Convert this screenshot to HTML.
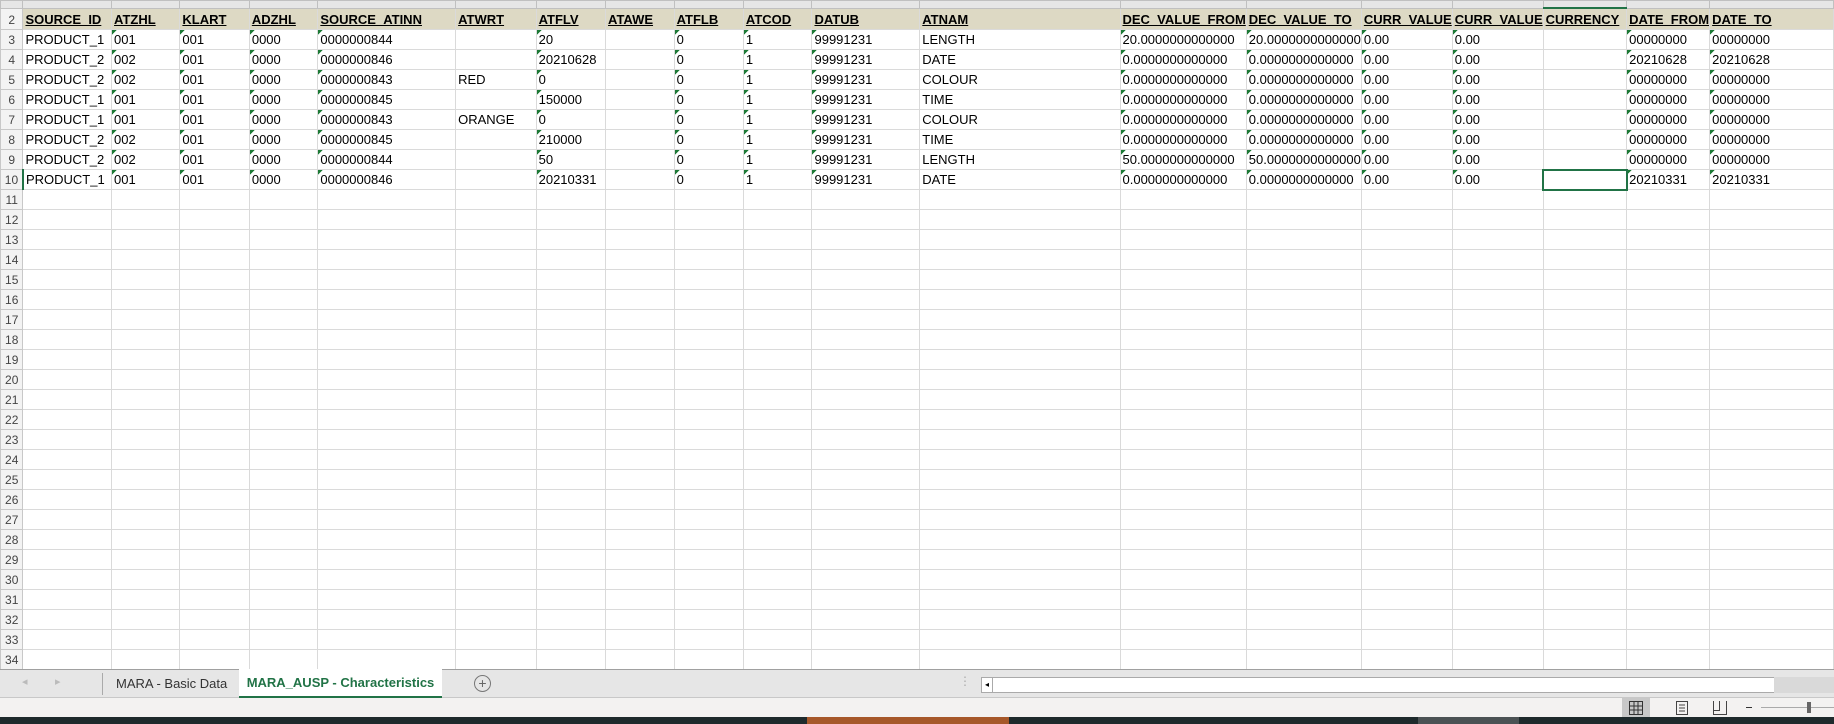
<!DOCTYPE html><html><head><style>
body{margin:0;width:1834px;height:724px;overflow:hidden;background:#fff;font-family:"Liberation Sans",sans-serif;position:relative}
table{border-collapse:collapse;table-layout:fixed;position:absolute;left:0;top:0}
td{border:1px solid #dadada;padding:0 0 0 2px;height:19px;font-size:13px;color:#000;white-space:nowrap;overflow:hidden;vertical-align:bottom;line-height:18px}
td.r{background:#f3f3f3;color:#444;text-align:center;padding:0;border-color:#c8c8c8;font-size:12px}
tr.top td{height:6px;background:#e6e6e6;border-color:#c0c0c0}
tr.h td{background:#ddd9c4;font-weight:bold;text-decoration:underline;height:20px}
tr.h td.r{background:#f3f3f3;text-decoration:none;font-weight:normal}
td.t{background-image:linear-gradient(135deg,#1d7a36 0 3.5px,transparent 3.5px);background-size:6px 6px;background-repeat:no-repeat}
td.sel{outline:2px solid #217346;outline-offset:-1px}
.tabs{position:absolute;left:0;top:669px;width:1834px;height:29px;background:#e6e6e6;border-top:1px solid #a0a0a0;border-bottom:1px solid #c8c8c8;box-sizing:border-box}
.status{position:absolute;left:0;top:698px;width:1834px;height:19px;background:#f3f2f1}
.dark{position:absolute;left:0;top:717px;width:1834px;height:7px;background:#1e2a2c}
</style></head><body>
<table>
<colgroup><col style="width:23px"><col style="width:89px"><col style="width:70px"><col style="width:71px"><col style="width:70px"><col style="width:140px"><col style="width:82px"><col style="width:70px"><col style="width:70px"><col style="width:71px"><col style="width:70px"><col style="width:111px"><col style="width:210px"><col style="width:113px"><col style="width:112px"><col style="width:84px"><col style="width:83px"><col style="width:84px"><col style="width:83px"><col style="width:128px"></colgroup>
<tr class="top"><td class="r"></td><td></td><td></td><td></td><td></td><td></td><td></td><td></td><td></td><td></td><td></td><td></td><td></td><td></td><td></td><td></td><td></td><td style="border-bottom:2px solid #217346"></td><td></td><td></td></tr>
<tr class="h"><td class="r">2</td><td>SOURCE_ID</td><td>ATZHL</td><td>KLART</td><td>ADZHL</td><td>SOURCE_ATINN</td><td>ATWRT</td><td>ATFLV</td><td>ATAWE</td><td>ATFLB</td><td>ATCOD</td><td>DATUB</td><td>ATNAM</td><td>DEC_VALUE_FROM</td><td>DEC_VALUE_TO</td><td>CURR_VALUE</td><td>CURR_VALUE</td><td>CURRENCY</td><td>DATE_FROM</td><td>DATE_TO</td></tr>
<tr><td class="r">3</td><td>PRODUCT_1</td><td class="t">001</td><td class="t">001</td><td class="t">0000</td><td class="t">0000000844</td><td></td><td class="t">20</td><td></td><td class="t">0</td><td class="t">1</td><td class="t">99991231</td><td>LENGTH</td><td class="t">20.0000000000000</td><td class="t">20.0000000000000</td><td class="t">0.00</td><td class="t">0.00</td><td></td><td class="t">00000000</td><td class="t">00000000</td></tr>
<tr><td class="r">4</td><td>PRODUCT_2</td><td class="t">002</td><td class="t">001</td><td class="t">0000</td><td class="t">0000000846</td><td></td><td class="t">20210628</td><td></td><td class="t">0</td><td class="t">1</td><td class="t">99991231</td><td>DATE</td><td class="t">0.0000000000000</td><td class="t">0.0000000000000</td><td class="t">0.00</td><td class="t">0.00</td><td></td><td class="t">20210628</td><td class="t">20210628</td></tr>
<tr><td class="r">5</td><td>PRODUCT_2</td><td class="t">002</td><td class="t">001</td><td class="t">0000</td><td class="t">0000000843</td><td>RED</td><td class="t">0</td><td></td><td class="t">0</td><td class="t">1</td><td class="t">99991231</td><td>COLOUR</td><td class="t">0.0000000000000</td><td class="t">0.0000000000000</td><td class="t">0.00</td><td class="t">0.00</td><td></td><td class="t">00000000</td><td class="t">00000000</td></tr>
<tr><td class="r">6</td><td>PRODUCT_1</td><td class="t">001</td><td class="t">001</td><td class="t">0000</td><td class="t">0000000845</td><td></td><td class="t">150000</td><td></td><td class="t">0</td><td class="t">1</td><td class="t">99991231</td><td>TIME</td><td class="t">0.0000000000000</td><td class="t">0.0000000000000</td><td class="t">0.00</td><td class="t">0.00</td><td></td><td class="t">00000000</td><td class="t">00000000</td></tr>
<tr><td class="r">7</td><td>PRODUCT_1</td><td class="t">001</td><td class="t">001</td><td class="t">0000</td><td class="t">0000000843</td><td>ORANGE</td><td class="t">0</td><td></td><td class="t">0</td><td class="t">1</td><td class="t">99991231</td><td>COLOUR</td><td class="t">0.0000000000000</td><td class="t">0.0000000000000</td><td class="t">0.00</td><td class="t">0.00</td><td></td><td class="t">00000000</td><td class="t">00000000</td></tr>
<tr><td class="r">8</td><td>PRODUCT_2</td><td class="t">002</td><td class="t">001</td><td class="t">0000</td><td class="t">0000000845</td><td></td><td class="t">210000</td><td></td><td class="t">0</td><td class="t">1</td><td class="t">99991231</td><td>TIME</td><td class="t">0.0000000000000</td><td class="t">0.0000000000000</td><td class="t">0.00</td><td class="t">0.00</td><td></td><td class="t">00000000</td><td class="t">00000000</td></tr>
<tr><td class="r">9</td><td>PRODUCT_2</td><td class="t">002</td><td class="t">001</td><td class="t">0000</td><td class="t">0000000844</td><td></td><td class="t">50</td><td></td><td class="t">0</td><td class="t">1</td><td class="t">99991231</td><td>LENGTH</td><td class="t">50.0000000000000</td><td class="t">50.0000000000000</td><td class="t">0.00</td><td class="t">0.00</td><td></td><td class="t">00000000</td><td class="t">00000000</td></tr>
<tr><td class="r" style="border-right:2px solid #217346">10</td><td>PRODUCT_1</td><td class="t">001</td><td class="t">001</td><td class="t">0000</td><td class="t">0000000846</td><td></td><td class="t">20210331</td><td></td><td class="t">0</td><td class="t">1</td><td class="t">99991231</td><td>DATE</td><td class="t">0.0000000000000</td><td class="t">0.0000000000000</td><td class="t">0.00</td><td class="t">0.00</td><td class="sel"></td><td class="t">20210331</td><td class="t">20210331</td></tr>
<tr><td class="r">11</td><td></td><td></td><td></td><td></td><td></td><td></td><td></td><td></td><td></td><td></td><td></td><td></td><td></td><td></td><td></td><td></td><td></td><td></td><td></td></tr>
<tr><td class="r">12</td><td></td><td></td><td></td><td></td><td></td><td></td><td></td><td></td><td></td><td></td><td></td><td></td><td></td><td></td><td></td><td></td><td></td><td></td><td></td></tr>
<tr><td class="r">13</td><td></td><td></td><td></td><td></td><td></td><td></td><td></td><td></td><td></td><td></td><td></td><td></td><td></td><td></td><td></td><td></td><td></td><td></td><td></td></tr>
<tr><td class="r">14</td><td></td><td></td><td></td><td></td><td></td><td></td><td></td><td></td><td></td><td></td><td></td><td></td><td></td><td></td><td></td><td></td><td></td><td></td><td></td></tr>
<tr><td class="r">15</td><td></td><td></td><td></td><td></td><td></td><td></td><td></td><td></td><td></td><td></td><td></td><td></td><td></td><td></td><td></td><td></td><td></td><td></td><td></td></tr>
<tr><td class="r">16</td><td></td><td></td><td></td><td></td><td></td><td></td><td></td><td></td><td></td><td></td><td></td><td></td><td></td><td></td><td></td><td></td><td></td><td></td><td></td></tr>
<tr><td class="r">17</td><td></td><td></td><td></td><td></td><td></td><td></td><td></td><td></td><td></td><td></td><td></td><td></td><td></td><td></td><td></td><td></td><td></td><td></td><td></td></tr>
<tr><td class="r">18</td><td></td><td></td><td></td><td></td><td></td><td></td><td></td><td></td><td></td><td></td><td></td><td></td><td></td><td></td><td></td><td></td><td></td><td></td><td></td></tr>
<tr><td class="r">19</td><td></td><td></td><td></td><td></td><td></td><td></td><td></td><td></td><td></td><td></td><td></td><td></td><td></td><td></td><td></td><td></td><td></td><td></td><td></td></tr>
<tr><td class="r">20</td><td></td><td></td><td></td><td></td><td></td><td></td><td></td><td></td><td></td><td></td><td></td><td></td><td></td><td></td><td></td><td></td><td></td><td></td><td></td></tr>
<tr><td class="r">21</td><td></td><td></td><td></td><td></td><td></td><td></td><td></td><td></td><td></td><td></td><td></td><td></td><td></td><td></td><td></td><td></td><td></td><td></td><td></td></tr>
<tr><td class="r">22</td><td></td><td></td><td></td><td></td><td></td><td></td><td></td><td></td><td></td><td></td><td></td><td></td><td></td><td></td><td></td><td></td><td></td><td></td><td></td></tr>
<tr><td class="r">23</td><td></td><td></td><td></td><td></td><td></td><td></td><td></td><td></td><td></td><td></td><td></td><td></td><td></td><td></td><td></td><td></td><td></td><td></td><td></td></tr>
<tr><td class="r">24</td><td></td><td></td><td></td><td></td><td></td><td></td><td></td><td></td><td></td><td></td><td></td><td></td><td></td><td></td><td></td><td></td><td></td><td></td><td></td></tr>
<tr><td class="r">25</td><td></td><td></td><td></td><td></td><td></td><td></td><td></td><td></td><td></td><td></td><td></td><td></td><td></td><td></td><td></td><td></td><td></td><td></td><td></td></tr>
<tr><td class="r">26</td><td></td><td></td><td></td><td></td><td></td><td></td><td></td><td></td><td></td><td></td><td></td><td></td><td></td><td></td><td></td><td></td><td></td><td></td><td></td></tr>
<tr><td class="r">27</td><td></td><td></td><td></td><td></td><td></td><td></td><td></td><td></td><td></td><td></td><td></td><td></td><td></td><td></td><td></td><td></td><td></td><td></td><td></td></tr>
<tr><td class="r">28</td><td></td><td></td><td></td><td></td><td></td><td></td><td></td><td></td><td></td><td></td><td></td><td></td><td></td><td></td><td></td><td></td><td></td><td></td><td></td></tr>
<tr><td class="r">29</td><td></td><td></td><td></td><td></td><td></td><td></td><td></td><td></td><td></td><td></td><td></td><td></td><td></td><td></td><td></td><td></td><td></td><td></td><td></td></tr>
<tr><td class="r">30</td><td></td><td></td><td></td><td></td><td></td><td></td><td></td><td></td><td></td><td></td><td></td><td></td><td></td><td></td><td></td><td></td><td></td><td></td><td></td></tr>
<tr><td class="r">31</td><td></td><td></td><td></td><td></td><td></td><td></td><td></td><td></td><td></td><td></td><td></td><td></td><td></td><td></td><td></td><td></td><td></td><td></td><td></td></tr>
<tr><td class="r">32</td><td></td><td></td><td></td><td></td><td></td><td></td><td></td><td></td><td></td><td></td><td></td><td></td><td></td><td></td><td></td><td></td><td></td><td></td><td></td></tr>
<tr><td class="r">33</td><td></td><td></td><td></td><td></td><td></td><td></td><td></td><td></td><td></td><td></td><td></td><td></td><td></td><td></td><td></td><td></td><td></td><td></td><td></td></tr>
<tr><td class="r">34</td><td></td><td></td><td></td><td></td><td></td><td></td><td></td><td></td><td></td><td></td><td></td><td></td><td></td><td></td><td></td><td></td><td></td><td></td><td></td></tr>
</table>
<div class="tabs">
<span style="position:absolute;left:22px;top:5px;color:#bbb;font-size:11px">◂</span>
<span style="position:absolute;left:55px;top:5px;color:#bbb;font-size:11px">▸</span>
<div style="position:absolute;left:102px;top:3px;width:1px;height:22px;background:#aaa"></div>
<span style="position:absolute;left:116px;top:6px;font-size:13px;color:#333">MARA - Basic Data</span>
<div style="position:absolute;left:239px;top:-1px;width:203px;height:27px;background:#fff;border-bottom:3px solid #217346;text-align:center;line-height:27px;font-size:13px;font-weight:bold;color:#217346">MARA_AUSP - Characteristics</div>
<div style="position:absolute;left:474px;top:5px;width:15px;height:15px;border:1px solid #777;border-radius:50%;text-align:center;line-height:15px;font-size:14px;color:#666">+</div>
<span style="position:absolute;left:959px;top:4px;color:#aaa;font-size:12px">⋮</span>
<div style="position:absolute;left:981px;top:7px;width:792px;height:14px;background:#fff;border:1px solid #aaa"><div style="width:10px;height:14px;border-right:1px solid #aaa;font-size:8px;line-height:14px;text-align:center">◂</div></div>
<div style="position:absolute;left:1774px;top:7px;width:60px;height:16px;background:#d9d9d9"></div>
</div>
<div class="status">
<div style="position:absolute;left:1622px;top:0;width:28px;height:19px;background:#c8c8c8"></div>
<svg style="position:absolute;left:1629px;top:3px" width="14" height="14"><rect x="0.5" y="0.5" width="13" height="13" fill="none" stroke="#333"/><path d="M5 0v14M9 0v14M0 5h14M0 9h14" stroke="#333"/></svg>
<svg style="position:absolute;left:1676px;top:3px" width="12" height="14"><rect x="0.5" y="0.5" width="11" height="13" fill="none" stroke="#444"/><path d="M3 4h6M3 7h6M3 10h6" stroke="#444"/></svg>
<svg style="position:absolute;left:1713px;top:3px" width="14" height="14"><path d="M0.5 0v13.5h13V0M0.5 9.5h6V0" fill="none" stroke="#444"/></svg>
<div style="position:absolute;left:1746px;top:9px;width:6px;height:1px;background:#333"></div>
<div style="position:absolute;left:1761px;top:9px;width:73px;height:1px;background:#aaa"></div>
<div style="position:absolute;left:1807px;top:4px;width:4px;height:11px;background:#666"></div>
</div>
<div class="dark"><div style="position:absolute;left:807px;width:202px;height:7px;background:#a6582a"></div><div style="position:absolute;left:1418px;width:101px;height:7px;background:#4b5254"></div></div>
</body></html>
